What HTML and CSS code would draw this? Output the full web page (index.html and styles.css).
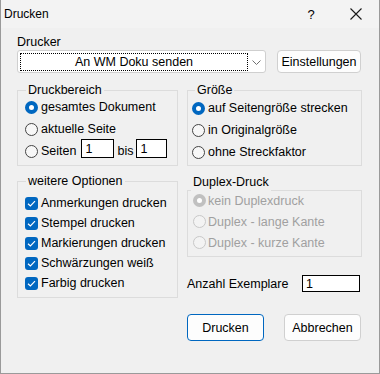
FILE: index.html
```html
<!DOCTYPE html>
<html lang="de">
<head>
    <meta charset="UTF-8">
    <title>Drucken</title>
    <link rel="stylesheet" href="styles.css">
</head>
<body>
    <div class="dialog">
        <div class="titlebar">
            <span class="title">Drucken</span>
            <span class="help">?</span>
            <svg class="close" width="12" height="12" viewBox="0 0 12 12">
                <path d="M0.5 0.5 L11.5 11.5 M11.5 0.5 L0.5 11.5" stroke="#1a1a1a" stroke-width="1.1" fill="none"/>
            </svg>
        </div>

        <div class="content">
            <div class="label">Drucker</div>
            <div class="printer-row">
                <div class="combo">
                    <span class="combo-value">An WM Doku senden</span>
                    <span class="chevron">
                        <svg width="9" height="5" viewBox="0 0 9 5">
                            <path d="M0.5 0.5 L4.5 4.5 L8.5 0.5" stroke="#707070" stroke-width="1" fill="none"/>
                        </svg>
                    </span>
                </div>
                <button class="btn btn-settings">Einstellungen</button>
            </div>

            <div class="groups">
                <div class="group group-range">
                    <div class="group-title">Druckbereich</div>
                    <div class="opt"><span class="radio on"></span>gesamtes Dokument</div>
                    <div class="opt"><span class="radio"></span>aktuelle Seite</div>
                    <div class="opt">
                        <span class="radio"></span>Seiten
                        <input class="field field-from" type="text" value="1">
                        bis
                        <input class="field field-to" type="text" value="1">
                    </div>
                </div>
                <div class="group group-size">
                    <div class="group-title">Größe</div>
                    <div class="opt"><span class="radio on"></span>auf Seitengröße strecken</div>
                    <div class="opt"><span class="radio"></span>in Originalgröße</div>
                    <div class="opt"><span class="radio"></span>ohne Streckfaktor</div>
                </div>
            </div>

            <div class="groups">
                <div class="group group-extra">
                    <div class="group-title">weitere Optionen</div>
                    <div class="opt opt-check"><span class="check"><svg width="13" height="13" viewBox="0 0 13 13"><path d="M3 6.8 L5.4 9 L10 4.2" stroke="#fff" stroke-width="1.2" fill="none"/></svg></span>Anmerkungen drucken</div>
                    <div class="opt opt-check"><span class="check"><svg width="13" height="13" viewBox="0 0 13 13"><path d="M3 6.8 L5.4 9 L10 4.2" stroke="#fff" stroke-width="1.2" fill="none"/></svg></span>Stempel drucken</div>
                    <div class="opt opt-check"><span class="check"><svg width="13" height="13" viewBox="0 0 13 13"><path d="M3 6.8 L5.4 9 L10 4.2" stroke="#fff" stroke-width="1.2" fill="none"/></svg></span>Markierungen drucken</div>
                    <div class="opt opt-check"><span class="check"><svg width="13" height="13" viewBox="0 0 13 13"><path d="M3 6.8 L5.4 9 L10 4.2" stroke="#fff" stroke-width="1.2" fill="none"/></svg></span>Schwärzungen weiß</div>
                    <div class="opt opt-check"><span class="check"><svg width="13" height="13" viewBox="0 0 13 13"><path d="M3 6.8 L5.4 9 L10 4.2" stroke="#fff" stroke-width="1.2" fill="none"/></svg></span>Farbig drucken</div>
                </div>

                <div class="side">
                    <div class="group group-duplex">
                        <div class="group-title">Duplex-Druck</div>
                        <div class="opt opt-disabled"><span class="radio on"></span>kein Duplexdruck</div>
                        <div class="opt opt-disabled"><span class="radio"></span>Duplex - lange Kante</div>
                        <div class="opt opt-disabled"><span class="radio"></span>Duplex - kurze Kante</div>
                    </div>
                    <div class="copies">
                        <span>Anzahl Exemplare</span>
                        <input class="field field-copies" type="text" value="1">
                    </div>
                </div>
            </div>

            <div class="actions">
                <button class="btn btn-action btn-default">Drucken</button>
                <button class="btn btn-action">Abbrechen</button>
            </div>
        </div>
    </div>
</body>
</html>
```

FILE: styles.css
```css
* {
    box-sizing: border-box;
}

body {
    margin: 0;
    font-family: "Liberation Sans", Arial, sans-serif;
    font-size: 12.5px;
    color: #000;
    background-color: #f0f0f0;
}

.dialog {
    width: 380px;
    height: 374px;
    border: 1px solid #9a9a9a;
    border-top: none;
    background-color: #f0f0f0;
}

/* Titelleiste */
.titlebar {
    height: 28px;
    display: flex;
    align-items: center;
    padding-left: 3px;
    background-color: #f3f3f3;
}

.title {
    flex: 1;
    font-size: 12px;
}

.help {
    width: 10px;
    margin-right: 34px;
    font-size: 13px;
    text-align: center;
}

.close {
    margin-right: 17px;
}

/* Inhalt */
.content {
    padding: 7px 17px 0 16px;
}

.label {
    line-height: 15px;
}

.printer-row {
    display: flex;
    gap: 11px;
    height: 23px;
}

.combo {
    width: 249px;
    display: flex;
    padding: 2px 0 1px 2px;
    background-color: #fff;
    border: 1px solid #cfcfcf;
    border-radius: 3px;
}

.combo-value {
    flex: 1;
    border: 1px dotted #000;
    text-align: center;
    line-height: 16px;
}

.chevron {
    width: 17px;
    display: flex;
    align-items: center;
    justify-content: center;
}

.btn {
    font-family: inherit;
    font-size: inherit;
    color: #000;
    padding: 0;
    background-color: #fdfdfd;
    border: 1px solid #d0d0d0;
    border-radius: 4px;
}

.btn-settings {
    width: 84px;
}

/* Gruppen */
.groups {
    display: flex;
    gap: 9px;
    margin-top: 17px;
}

.groups + .groups {
    margin-top: 15px;
}

.group {
    display: flex;
    flex-direction: column;
    border: 1px solid #dcdcdc;
}

.group-title {
    align-self: flex-start;
    line-height: 16px;
    margin-top: -9px;
    margin-bottom: -1px;
    padding: 0 2px;
    background-color: #f0f0f0;
}

.group-range {
    width: 161px;
    padding: 0 0 2px 7px;
}

.group-range .group-title {
    margin-left: 1px;
    margin-bottom: -2px;
}

.group-size {
    flex: 1;
    padding: 0 0 2px 4px;
}

.group-size .group-title {
    margin-left: 3px;
}

.group-extra {
    width: 161px;
    padding: 0 0 4px 7px;
}

.group-extra .group-title {
    margin-left: 1px;
    margin-bottom: 4px;
}

.side {
    flex: 1;
    display: flex;
    flex-direction: column;
}

.group-duplex {
    margin-top: 9px;
    padding: 0 0 3px 5px;
}

.group-duplex .group-title {
    line-height: 17px;
    margin-top: -17px;
    margin-left: -2px;
}

.opt {
    display: flex;
    align-items: center;
    height: 22px;
    white-space: nowrap;
}

.opt-check {
    height: 20px;
}

.opt-disabled {
    height: 21px;
    color: #a0a0a0;
}

.radio {
    flex: none;
    width: 13px;
    height: 13px;
    margin-right: 3px;
    border: 1px solid #444;
    border-radius: 50%;
    background-color: #f7f7f7;
}

.radio.on {
    border: 4px solid #0067c0;
    background-color: #fff;
}

.opt-disabled .radio {
    margin-right: 2px;
    border-color: #c8c8c8;
    background-color: #f3f3f3;
}

.opt-disabled .radio.on {
    border-color: #c0c0c0;
    background-color: #fff;
}

.check {
    flex: none;
    width: 13px;
    height: 13px;
    margin-right: 3px;
    border-radius: 3px;
    background-color: #0067c0;
}

.check svg {
    display: block;
}

/* Eingabefelder */
.field {
    font-family: inherit;
    font-size: inherit;
    color: #000;
    padding: 0 3px;
    background-color: #fff;
    border: 1px solid #000;
    border-radius: 0;
    outline: none;
}

.field-from {
    width: 33px;
    height: 19px;
    margin: 0 3px 5px 5px;
}

.field-to {
    width: 31px;
    height: 19px;
    margin: 0 0 5px 3px;
}

.copies {
    display: flex;
    align-items: center;
    justify-content: space-between;
    height: 17px;
    margin-top: 18px;
    padding-right: 2px;
}

.field-copies {
    width: 58px;
    height: 17px;
}

/* Schaltflächen */
.actions {
    display: flex;
    justify-content: flex-end;
    gap: 20px;
    margin-top: 16px;
    padding-right: 1px;
}

.btn-action {
    width: 77px;
    height: 27px;
}

.btn-default {
    border-color: #0067c0;
}
```
